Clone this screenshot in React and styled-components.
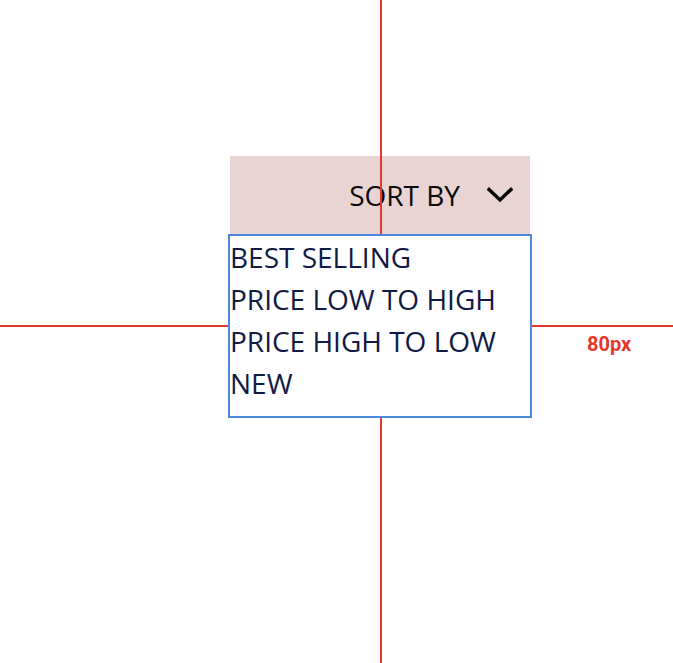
import React from "react";
import styled, { createGlobalStyle } from "styled-components";

const GlobalStyle = createGlobalStyle`
  body {
    margin: 0;
    background: #ffffff;
    font-family: "Open Sans", "Liberation Sans", sans-serif;
  }
`;

const SORT_OPTIONS = [
  "BEST SELLING",
  "PRICE LOW TO HIGH",
  "PRICE HIGH TO LOW",
  "NEW",
];

const Chevron = () => (
  <svg width="26" height="16" viewBox="0 0 26 16" fill="none">
    <path
      d="M2 2.5 L13 13 L24 2.5"
      stroke="#000000"
      strokeWidth="3.4"
      strokeLinecap="square"
    />
  </svg>
);

const App = () => {
  return (
    <Canvas>
      <GlobalStyle />
      <Stage>
        <SortWrap>
          <SortHeader>
            <SortLabel>SORT BY</SortLabel>
            <Chevron />
          </SortHeader>
          <Dropdown>
            {SORT_OPTIONS.map((opt) => (
              <Option key={opt}>{opt}</Option>
            ))}
          </Dropdown>
        </SortWrap>
      </Stage>
      <GuideLine $dir="v" />
      <GuideLine $dir="h" />
      <Measure>80px</Measure>
    </Canvas>
  );
};

const Canvas = styled.div`
  position: relative;
  width: 673px;
  height: 663px;
  overflow: hidden;
  background: #ffffff;
`;

const Stage = styled.div`
  padding: 156px 0 0 228px;
`;

const SortWrap = styled.div`
  width: 304px;
  display: flex;
  flex-direction: column;
  align-items: center;
`;

const SortHeader = styled.div`
  box-sizing: border-box;
  width: 300px;
  height: 78px;
  background: #e9d3d3;
  display: flex;
  justify-content: flex-end;
  align-items: center;
  gap: 27px;
  padding-right: 17px;
`;

const SortLabel = styled.span`
  font-size: 28px;
  color: #0a0a0a;
`;

const Dropdown = styled.ul`
  position: relative;
  z-index: 2;
  box-sizing: border-box;
  width: 304px;
  height: 184px;
  margin: 0;
  padding: 0 0 12px 0;
  list-style: none;
  background: #ffffff;
  border: 2px solid #4a88dc;
`;

const Option = styled.li`
  font-size: 28px;
  line-height: 42px;
  height: 42px;
  color: #111a45;
  white-space: nowrap;
`;

const GuideLine = styled.div`
  position: absolute;
  z-index: 1;
  background: #e5372a;
  ${({ $dir }) =>
    $dir === "v"
      ? `left: 380px; top: 0; width: 2px; height: 100%;`
      : `top: 325px; left: 0; height: 2px; width: 100%;`}
`;

const Measure = styled.span`
  position: absolute;
  z-index: 3;
  left: 587px;
  top: 332px;
  font-family: Roboto, "Liberation Sans", sans-serif;
  font-weight: 700;
  font-size: 20px;
  color: #e5372a;
`;

export default App;
